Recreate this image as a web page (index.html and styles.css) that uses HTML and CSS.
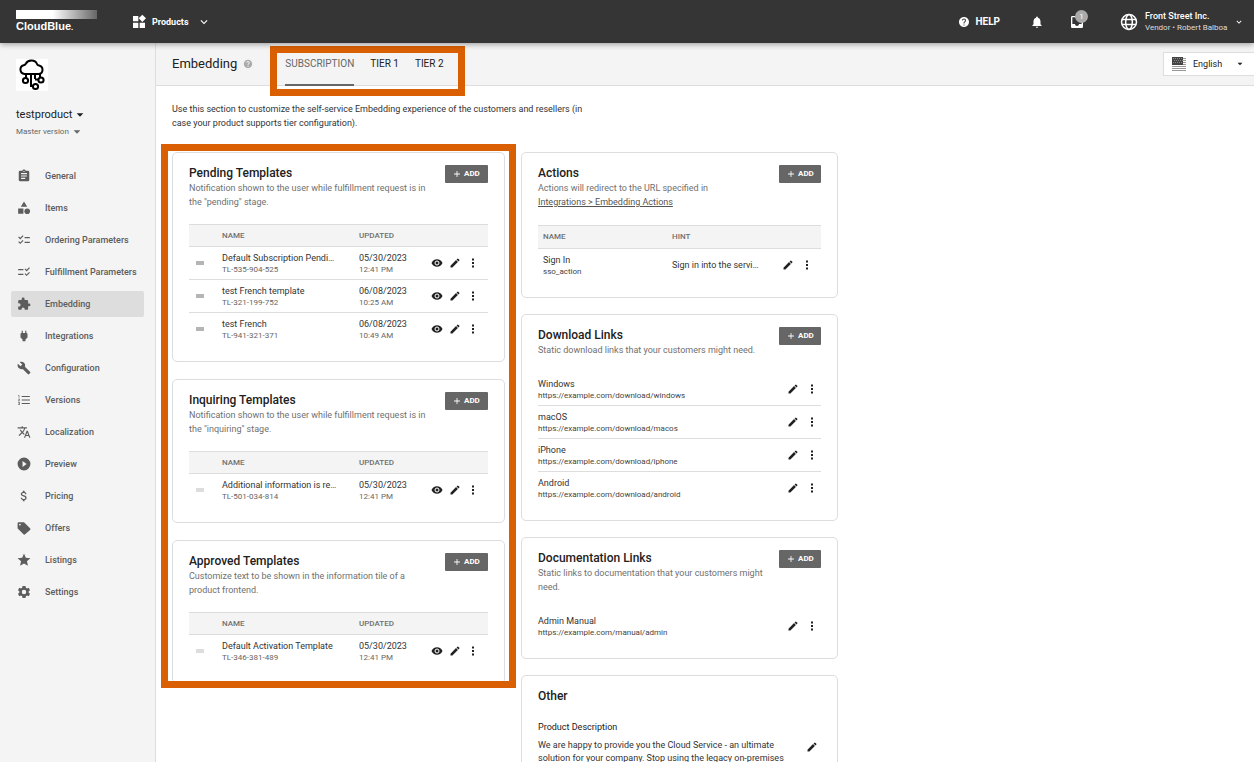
FILE: index.html
```html
<!DOCTYPE html>
<html lang="en">
<head>
<meta charset="utf-8">
<meta name="viewport" content="width=device-width, initial-scale=1">
<title>Embedding - CloudBlue</title>
<link rel="stylesheet" href="styles.css">
</head>
<body>
<svg class="sprite" aria-hidden="true">
  <symbol id="eye" viewBox="0 0 24 24"><path d="M12 4.5C7 4.500 2.730 7.610 1 12c1.730 4.390 6 7.500 11 7.500s9.270-3.110 11-7.500c-1.730-4.390-6-7.500-11-7.500z"/><circle cx="12" cy="12" r="4" fill="none" stroke="#fff" stroke-width="2"/></symbol>
  <symbol id="pencil" viewBox="0 0 24 24"><path d="M3 17.250V21h3.750L17.810 9.940l-3.750-3.750L3 17.250zM20.710 7.040a1 1 0 0 0 0-1.410l-2.340-2.340a1 1 0 0 0-1.410 0l-1.830 1.830 3.750 3.750 1.830-1.830z"/></symbol>
  <symbol id="dots" viewBox="0 0 24 24"><path d="M10 3h4v4h-4zM10 10h4v4h-4zM10 17h4v4h-4z"/></symbol>
  <symbol id="plus" viewBox="0 0 24 24"><path d="M19 13h-6v6h-2v-6H5v-2h6V5h2v6h6z"/></symbol>
  <symbol id="help" viewBox="0 0 24 24"><path d="M12 2C6.480 2 2 6.480 2 12s4.480 10 10 10 10-4.480 10-10S17.520 2 12 2zm1 17h-2v-2h2v2zm2.070-7.750l-.9.920C13.450 12.900 13 13.500 13 15h-2v-.5c0-1.100.45-2.100 1.170-2.830l1.240-1.260c.37-.36.59-.86.59-1.410 0-1.100-.9-2-2-2s-2 .9-2 2H8c0-2.210 1.790-4 4-4s4 1.790 4 4c0 .88-.36 1.680-.93 2.250z"/></symbol>
  <symbol id="chevron" viewBox="0 0 24 24"><path d="M7.410 8.590L12 13.170l4.590-4.580L18 10l-6 6-6-6z"/></symbol>
  <symbol id="caret" viewBox="0 0 24 24"><path d="M2 7h20L12 17z"/></symbol>
</svg>

<header class="topbar">
  <a class="logo" href="#"><span class="logo-bar"></span><span class="logo-name">CloudBlue<small>.</small></span></a>
  <button class="products" type="button">
    <svg class="icon-16" viewBox="0 0 24 24"><path d="M3 3h8v8H3zM3 13h8v8H3zM13 13h8v8h-8zM17 1l5.500 5.500L17 12l-5.500-5.500z"/></svg>
    <span>Products</span>
    <svg class="icon-14"><use href="#chevron"/></svg>
  </button>
  <div class="tools">
    <a class="help-link" href="#"><svg class="icon-12"><use href="#help"/></svg>HELP</a>
    <button class="tool" type="button" aria-label="Notifications"><svg class="icon-14" viewBox="0 0 24 24"><path d="M12 22c1.100 0 2-.9 2-2h-4c0 1.100.89 2 2 2zm6-6v-5c0-3.070-1.640-5.640-4.500-6.320V4c0-.83-.67-1.500-1.500-1.500s-1.500.67-1.500 1.500v.68C7.630 5.360 6 7.920 6 11v5l-2 2v1h16v-1l-2-2z"/></svg></button>
    <button class="tool inbox" type="button" aria-label="Inbox"><svg class="icon-16" viewBox="0 0 24 24"><path d="M19 3H5a2 2 0 0 0-2 2v14c0 1.100.9 2 2 2h14a2 2 0 0 0 2-2V5a2 2 0 0 0-2-2zm0 12h-4c0 1.660-1.350 3-3 3s-3-1.340-3-3H5V5h14v10z"/></svg><span class="badge">1</span></button>
    <button class="account" type="button">
      <svg class="icon-20 globe" viewBox="0 0 24 24" stroke="currentColor" stroke-width="1.800"><circle cx="12" cy="12" r="9"/><ellipse cx="12" cy="12" rx="4" ry="9"/><path d="M3.500 9h17M3.500 15h17"/></svg>
      <span class="account-text"><b>Front Street Inc.</b><small>Vendor • Robert Balboa</small></span>
      <svg class="icon-10"><use href="#chevron"/></svg>
    </button>
  </div>
</header>

<div class="shell">
  <aside class="sidebar">
    <svg class="product-logo" viewBox="0 0 32 32" stroke="#000" stroke-width="2"><path d="M9 15h-.5a4.500 4.500 0 0 1-.8-8.800C9 6 9.500 5.500 10 4.500 11.500 1 19 0 21 5c.3 1 1 1.300 2 1.500 5 1 4.500 8.500-.5 8.500zM10 15v4M15 15v12h2M19 15v5M24 15v4M19 20.500h4"/><circle cx="9.500" cy="21.500" r="2.600"/><circle cx="25" cy="21" r="2.600"/><circle cx="19.500" cy="27.500" r="2.600"/></svg>
    <button class="product-name" type="button">testproduct <svg class="icon-8"><use href="#caret"/></svg></button>
    <button class="product-version" type="button">Master version <svg class="icon-8"><use href="#caret"/></svg></button>
    <nav class="menu">
      <a href="#"><svg viewBox="0 0 24 24"><path d="M19 3h-4.200C14.400 1.800 13.300 1 12 1s-2.400.8-2.800 2H5a2 2 0 0 0-2 2v14c0 1.100.9 2 2 2h14a2 2 0 0 0 2-2V5a2 2 0 0 0-2-2zm-7 0a1 1 0 1 1 0 2 1 1 0 0 1 0-2zm2 14H7v-2h7v2zm3-4H7v-2h10v2zm0-4H7V7h10v2z"/></svg>General</a>
      <a href="#"><svg viewBox="0 0 24 24"><path d="M12 1l5.500 9h-11zM2 13h9v9H2z"/><circle cx="17.500" cy="17.500" r="4.800"/></svg>Items</a>
      <a href="#"><svg viewBox="0 0 24 24"><path d="M22 7h-9v2h9V7zm0 8h-9v2h9v-2zM5.540 11L2 7.460l1.410-1.410 2.120 2.120 4.240-4.240 1.410 1.410L5.540 11zm0 8L2 15.460l1.410-1.410 2.120 2.120 4.240-4.240 1.410 1.410L5.540 19z"/></svg>Ordering Parameters</a>
      <a href="#"><svg viewBox="0 0 24 24"><path d="M2 7h9v2H2zM2 15h9v2H2zM16.540 11L13 7.460l1.410-1.410 2.120 2.120 4.240-4.240 1.410 1.410L16.540 11zm0 8L13 15.460l1.410-1.410 2.120 2.120 4.240-4.240 1.410 1.410L16.540 19z"/></svg>Fulfillment Parameters</a>
      <a href="#" class="active" aria-current="page"><svg viewBox="0 0 24 24"><path d="M20.500 11H19V7a2 2 0 0 0-2-2h-4V3.500a2.500 2.500 0 0 0-5 0V5H4a2 2 0 0 0-2 2v3.800h1.500a2.700 2.700 0 0 1 0 5.400H2V20c0 1.100.9 2 2 2h3.800v-1.500a2.700 2.700 0 0 1 5.400 0V22H17a2 2 0 0 0 2-2v-4h1.500a2.500 2.500 0 0 0 0-5z"/></svg>Embedding</a>
      <a href="#"><svg viewBox="0 0 24 24"><path d="M16 7V3h-2v4h-4V3H8v4C6.900 7 6 7.900 6 9v5.500L9.500 18v3h5v-3l3.500-3.500V9c0-1.100-.9-2-2-2z"/></svg>Integrations</a>
      <a href="#"><svg viewBox="0 0 24 24"><path d="M22.700 19l-9.100-9.100c.9-2.300.4-5-1.500-6.900-2-2-5-2.400-7.400-1.300L9 6 6 9 1.600 4.700C.4 7.100.9 10.100 2.900 12.100c1.900 1.900 4.600 2.400 6.900 1.500l9.100 9.100c.4.4 1 .4 1.400 0l2.300-2.300c.5-.4.5-1.100.1-1.400z"/></svg>Configuration</a>
      <a href="#"><svg viewBox="0 0 24 24"><path d="M2 17h2v.5H3v1h1v.5H2v1h3v-4H2zM3 8h1V4H2v1h1zM2 11h1.800L2 13.100v.9h3v-1H3.200L5 10.900V10H2zM8 5v2h14V5zM8 19h14v-2H8zM8 13h14v-2H8z"/></svg>Versions</a>
      <a href="#"><svg viewBox="0 0 24 24"><path d="M12.870 15.070l-2.540-2.510.03-.03A17.520 17.520 0 0 0 14.070 6H17V4h-7V2H8v2H1v2h11.170C11.500 7.920 10.440 9.750 9 11.350 8.070 10.320 7.300 9.190 6.690 8h-2c.73 1.630 1.730 3.170 2.980 4.560l-5.090 5.020L4 19l5-5 3.110 3.110.76-2.040zM18.500 10h-2L12 22h2l1.120-3h4.750L21 22h2l-4.500-12zm-2.620 7l1.620-4.330L19.120 17h-3.240z"/></svg>Localization</a>
      <a href="#"><svg viewBox="0 0 24 24"><path d="M12 1a11 11 0 1 0 0 22 11 11 0 0 0 0-22zM9.500 17V7l7 5z"/></svg>Preview</a>
      <a href="#"><svg viewBox="0 0 24 24"><path d="M11.800 10.900c-2.270-.59-3-1.200-3-2.150 0-1.090 1.010-1.850 2.700-1.850 1.780 0 2.440.85 2.500 2.100h2.210c-.07-1.720-1.120-3.300-3.210-3.810V3h-3v2.160c-1.940.42-3.500 1.680-3.500 3.610 0 2.310 1.910 3.460 4.700 4.130 2.500.6 3 1.480 3 2.410 0 .69-.49 1.790-2.700 1.790-2.060 0-2.870-.92-2.980-2.100h-2.200c.12 2.190 1.760 3.420 3.680 3.830V21h3v-2.150c1.950-.37 3.500-1.500 3.500-3.550 0-2.840-2.430-3.810-4.700-4.400z"/></svg>Pricing</a>
      <a href="#"><svg viewBox="0 0 24 24"><path d="M22.400 12.600l-10-10C12 2.200 11.500 2 11 2H3a2 2 0 0 0-2 2v8c0 .6.200 1.100.6 1.400l9.500 9.500c.8.8 2 .8 2.800 0l8.500-7.500c.8-.8.800-2 0-2.800zM5 7.500A1.500 1.500 0 1 1 5 4.500a1.500 1.500 0 0 1 0 3z"/></svg>Offers</a>
      <a href="#"><svg viewBox="0 0 24 24"><path d="M12 17.800L18.800 22 17 14.200l6-5.200-8-.7L12 1 9 8.300 1 9l6 5.200L5.200 22z"/></svg>Listings</a>
      <a href="#"><svg viewBox="0 0 24 24"><path d="M20 13.200a8 8 0 0 0 0-2.400l2.400-1.900-2.400-4.200-2.900 1.100a8 8 0 0 0-2-1.200L14.600 1.600H9.400L9 4.600a8 8 0 0 0-2.100 1.200L4 4.700 1.600 8.900 4 10.800a8 8 0 0 0 0 2.400l-2.400 1.900L4 19.300l2.900-1.100a8 8 0 0 0 2.100 1.200l.4 3h5.200l.5-3a8 8 0 0 0 2-1.200l2.900 1.100 2.400-4.200zM12 15.800a3.800 3.800 0 1 1 0-7.600 3.800 3.800 0 0 1 0 7.600z"/></svg>Settings</a>
    </nav>
  </aside>

  <main class="main">
    <div class="subheader">
      <h1>Embedding</h1>
      <svg class="icon-10 hint"><use href="#help"/></svg>
      <nav class="tabs highlight">
        <a href="#" class="current">SUBSCRIPTION</a>
        <a href="#">TIER 1</a>
        <a href="#">TIER 2</a>
      </nav>
      <button class="language" type="button">
        <svg class="flag" viewBox="0 0 14 14"><path fill="#fff" d="M0 0h14v14H0z"/><path fill="#999" d="M0 1h14v1H0zM0 3h14v1H0zM0 5h14v1H0zM0 7h14v1H0zM0 9h14v1H0zM0 11h14v1H0zM0 13h14v1H0z"/><path fill="#444" d="M0 0h11v8H0z"/><path stroke="#888" stroke-dasharray="1 1" d="M1 1.500h9M2 3.500h9M1 5.500h9"/></svg>
        <span>English</span>
        <svg class="icon-6"><use href="#caret"/></svg>
      </button>
    </div>

    <div class="content">
      <p class="intro">Use this section to customize the self-service Embedding experience of the customers and resellers (in case your product supports tier configuration).</p>
      <div class="columns">
        <div class="column highlight">
          <section class="card">
            <div class="card-head">
              <div><h2>Pending Templates</h2><p>Notification shown to the user while fulfillment request is in the "pending" stage.</p></div>
              <button class="add" type="button"><svg class="icon-10"><use href="#plus"/></svg>ADD</button>
            </div>
            <table class="templates">
              <thead><tr><th class="grip-col"></th><th class="name-col">NAME</th><th>UPDATED</th><th class="act-col"></th></tr></thead>
              <tbody>
                <tr><td><span class="grip"></span></td><td><span class="line">Default Subscription Pendi…</span><small>TL-535-904-525</small></td><td><span class="line">05/30/2023</span><small>12:41 PM</small></td><td><div class="acts"><button type="button" aria-label="View"><svg><use href="#eye"/></svg></button><button type="button" aria-label="Edit"><svg><use href="#pencil"/></svg></button><button type="button" aria-label="More"><svg><use href="#dots"/></svg></button></div></td></tr>
                <tr><td><span class="grip"></span></td><td><span class="line">test French template</span><small>TL-321-199-752</small></td><td><span class="line">06/08/2023</span><small>10:25 AM</small></td><td><div class="acts"><button type="button" aria-label="View"><svg><use href="#eye"/></svg></button><button type="button" aria-label="Edit"><svg><use href="#pencil"/></svg></button><button type="button" aria-label="More"><svg><use href="#dots"/></svg></button></div></td></tr>
                <tr><td><span class="grip"></span></td><td><span class="line">test French</span><small>TL-941-321-371</small></td><td><span class="line">06/08/2023</span><small>10:49 AM</small></td><td><div class="acts"><button type="button" aria-label="View"><svg><use href="#eye"/></svg></button><button type="button" aria-label="Edit"><svg><use href="#pencil"/></svg></button><button type="button" aria-label="More"><svg><use href="#dots"/></svg></button></div></td></tr>
              </tbody>
            </table>
          </section>
          <section class="card">
            <div class="card-head">
              <div><h2>Inquiring Templates</h2><p>Notification shown to the user while fulfillment request is in the "inquiring" stage.</p></div>
              <button class="add" type="button"><svg class="icon-10"><use href="#plus"/></svg>ADD</button>
            </div>
            <table class="templates">
              <thead><tr><th class="grip-col"></th><th class="name-col">NAME</th><th>UPDATED</th><th class="act-col"></th></tr></thead>
              <tbody>
                <tr><td><span class="grip off"></span></td><td><span class="line">Additional information is re…</span><small>TL-501-034-814</small></td><td><span class="line">05/30/2023</span><small>12:41 PM</small></td><td><div class="acts"><button type="button" aria-label="View"><svg><use href="#eye"/></svg></button><button type="button" aria-label="Edit"><svg><use href="#pencil"/></svg></button><button type="button" aria-label="More"><svg><use href="#dots"/></svg></button></div></td></tr>
              </tbody>
            </table>
          </section>
          <section class="card">
            <div class="card-head">
              <div><h2>Approved Templates</h2><p>Customize text to be shown in the information tile of a product frontend.</p></div>
              <button class="add" type="button"><svg class="icon-10"><use href="#plus"/></svg>ADD</button>
            </div>
            <table class="templates">
              <thead><tr><th class="grip-col"></th><th class="name-col">NAME</th><th>UPDATED</th><th class="act-col"></th></tr></thead>
              <tbody>
                <tr><td><span class="grip off"></span></td><td><span class="line">Default Activation Template</span><small>TL-346-381-489</small></td><td><span class="line">05/30/2023</span><small>12:41 PM</small></td><td><div class="acts"><button type="button" aria-label="View"><svg><use href="#eye"/></svg></button><button type="button" aria-label="Edit"><svg><use href="#pencil"/></svg></button><button type="button" aria-label="More"><svg><use href="#dots"/></svg></button></div></td></tr>
              </tbody>
            </table>
          </section>
        </div>

        <div class="column side">
          <section class="card">
            <div class="card-head">
              <div><h2>Actions</h2><p>Actions will redirect to the URL specified in<br><a href="#">Integrations &gt; Embedding Actions</a></p></div>
              <button class="add" type="button"><svg class="icon-10"><use href="#plus"/></svg>ADD</button>
            </div>
            <table class="actions">
              <thead><tr><th class="name-col">NAME</th><th>HINT</th><th class="act-col"></th></tr></thead>
              <tbody>
                <tr><td><span class="line">Sign In</span><small class="dark">sso_action</small></td><td><span class="line">Sign in into the servi…</span></td><td><div class="acts"><button type="button" aria-label="Edit"><svg><use href="#pencil"/></svg></button><button type="button" aria-label="More"><svg><use href="#dots"/></svg></button></div></td></tr>
              </tbody>
            </table>
          </section>
          <section class="card">
            <div class="card-head">
              <div><h2>Download Links</h2><p>Static download links that your customers might need.</p></div>
              <button class="add" type="button"><svg class="icon-10"><use href="#plus"/></svg>ADD</button>
            </div>
            <ul class="links">
              <li><div><span class="line">Windows</span><small class="dark">https://example.com/download/windows</small></div><div class="acts"><button type="button" aria-label="Edit"><svg><use href="#pencil"/></svg></button><button type="button" aria-label="More"><svg><use href="#dots"/></svg></button></div></li>
              <li><div><span class="line">macOS</span><small class="dark">https://example.com/download/macos</small></div><div class="acts"><button type="button" aria-label="Edit"><svg><use href="#pencil"/></svg></button><button type="button" aria-label="More"><svg><use href="#dots"/></svg></button></div></li>
              <li><div><span class="line">iPhone</span><small class="dark">https://example.com/download/iphone</small></div><div class="acts"><button type="button" aria-label="Edit"><svg><use href="#pencil"/></svg></button><button type="button" aria-label="More"><svg><use href="#dots"/></svg></button></div></li>
              <li><div><span class="line">Android</span><small class="dark">https://example.com/download/android</small></div><div class="acts"><button type="button" aria-label="Edit"><svg><use href="#pencil"/></svg></button><button type="button" aria-label="More"><svg><use href="#dots"/></svg></button></div></li>
            </ul>
          </section>
          <section class="card">
            <div class="card-head">
              <div><h2>Documentation Links</h2><p>Static links to documentation that your customers might need.</p></div>
              <button class="add" type="button"><svg class="icon-10"><use href="#plus"/></svg>ADD</button>
            </div>
            <ul class="links">
              <li><div><span class="line">Admin Manual</span><small class="dark">https://example.com/manual/admin</small></div><div class="acts"><button type="button" aria-label="Edit"><svg><use href="#pencil"/></svg></button><button type="button" aria-label="More"><svg><use href="#dots"/></svg></button></div></li>
            </ul>
          </section>
          <section class="card">
            <h2>Other</h2>
            <h3>Product Description</h3>
            <div class="description">
              <p>We are happy to provide you the Cloud Service - an ultimate solution for your company. Stop using the legacy on-premises</p>
              <div class="acts"><button type="button" aria-label="Edit"><svg><use href="#pencil"/></svg></button></div>
            </div>
          </section>
        </div>
      </div>
    </div>
  </main>
</div>
</body>
</html>
```
FILE: styles.css
```css
* { box-sizing: border-box; }

body {
  margin: 0;
  height: 100vh;
  display: flex;
  flex-direction: column;
  overflow: hidden;
  background: #fff;
  color: #212121;
  font: 9px/14px Roboto, "Liberation Sans", sans-serif;
}

h1, h2, h3, p, ul { margin: 0; padding: 0; font-weight: 400; }
a { color: inherit; text-decoration: none; }
button { margin: 0; padding: 0; border: 0; background: none; color: inherit; font: inherit; text-align: left; cursor: pointer; }
svg { display: block; flex: none; fill: currentColor; }
small { font-size: 8px; }

.sprite { position: absolute; width: 0; height: 0; }
.icon-6 { width: 6px; height: 6px; }
.icon-8 { width: 8px; height: 8px; }
.icon-10 { width: 10px; height: 10px; }
.icon-12 { width: 12px; height: 12px; }
.icon-14 { width: 14px; height: 14px; }
.icon-16 { width: 16px; height: 16px; }
.icon-20 { width: 20px; height: 20px; }

/* Top bar */
.topbar {
  flex: none;
  z-index: 1;
  display: flex;
  align-items: center;
  height: 43px;
  padding: 0 10px 0 16px;
  background: #353535;
  color: #fff;
  box-shadow: 0 1px 6px rgba(0, 0, 0, 0.4);
}
.logo { display: flex; flex-direction: column; width: 81px; gap: 2px; }
.logo-bar { height: 9px; background: linear-gradient(90deg, #fff 45%, #666); }
.logo-name { font: bold 11px/11px "Liberation Sans", Arial, sans-serif; }
.products { display: flex; align-items: center; gap: 5px; margin-left: 34px; font-weight: 700; }
.products svg:last-child { margin-left: 3px; }
.tools { display: flex; align-items: center; margin-left: auto; }
.help-link { display: flex; align-items: center; gap: 5px; font-size: 10px; font-weight: 700; }
.tool { margin-left: 30px; }
.inbox { position: relative; margin-left: 25px; }
.badge {
  position: absolute;
  top: -4px;
  right: -3px;
  width: 13px;
  height: 13px;
  border-radius: 50%;
  background: #aaa;
  font-size: 8px;
  line-height: 13px;
  text-align: center;
}
.account { display: flex; align-items: center; margin-left: 34px; }
.globe { fill: none; }
.account-text { display: flex; flex-direction: column; width: 84px; margin: 0 5px 0 6px; line-height: 11px; white-space: nowrap; }
.account-text b { font-weight: 500; }
.account-text small { color: #ddd; }

.shell { flex: 1; display: flex; min-height: 0; }

/* Sidebar */
.sidebar { flex: none; width: 156px; padding: 16px 11px 0; border-right: 1px solid #ddd; background: #f4f4f4; }
.product-logo { width: 32px; height: 32px; margin-left: 5px; background: #fff; fill: none; }
.product-name, .product-version { display: flex; align-items: center; gap: 4px; margin-left: 5px; }
.product-name { margin-top: 16px; font-size: 11px; line-height: 16px; }
.product-version { margin-top: 1px; color: #666; font-size: 8px; line-height: 16px; }
.menu { display: flex; flex-direction: column; gap: 6px; margin-top: 23px; }
.menu a { display: flex; align-items: center; gap: 14px; height: 26px; padding-left: 6px; border-radius: 2px; color: #5c5c5c; font-weight: 500; white-space: nowrap; }
.menu svg { width: 14px; height: 14px; }
.menu .active { background: #ddd; }

/* Page header */
.main { flex: 1; min-width: 0; display: flex; flex-direction: column; }
.subheader { flex: none; display: flex; align-items: center; height: 43px; padding-left: 16px; border-bottom: 1px solid #ddd; background: #f4f4f4; }
h1 { font-size: 13px; }
.hint { margin-left: 6px; color: #aaa; }
.tabs { display: flex; gap: 16px; align-self: stretch; margin-left: 32px; font-size: 10px; }
.tabs a { display: flex; align-items: center; height: 43px; border-bottom: 2px solid transparent; }
.tabs .current { border-color: #666; color: #666; }
.language { display: flex; align-items: center; width: 91px; height: 24px; margin-left: auto; padding-left: 8px; border: 1px solid #ddd; border-right: 0; background: #fff; }
.language span { flex: 1; margin-left: 7px; }
.language .icon-6 { margin-right: 11px; }
.flag { width: 14px; height: 14px; }

/* Orange callout frames */
.highlight { position: relative; }
.highlight::after { content: ""; position: absolute; border: 7px solid #d95f02; pointer-events: none; }
.tabs.highlight::after { inset: 3px -21px -11px -15px; }
.column.highlight::after { inset: -8px -11px -4px -11px; }

/* Content */
.content { flex: 1; min-height: 0; overflow: hidden; padding: 16px; }
.intro { max-width: 426px; color: #333; }
.columns { display: grid; grid-template-columns: minmax(0, 333px) minmax(0, 317px); gap: 16px; align-items: start; margin-top: 22px; }
.column { display: grid; gap: 17px; }

.card { padding: 12px 16px 15px; border: 1px solid #ddd; border-radius: 5px; }
.card-head { display: flex; justify-content: space-between; gap: 8px; margin-bottom: 15px; }
.card-head p { color: #707070; }
.card-head p a { color: #555; text-decoration: underline; }
h2 { font-size: 12px; line-height: 16px; font-weight: 500; }
.add { flex: none; display: flex; align-items: center; gap: 2px; width: 43px; height: 18px; padding-left: 7px; border-radius: 1px; background: #666; color: #fff; font-weight: 700; font-size: 8px; }
.side { gap: 16px; }
.side .card-head { margin-bottom: 16px; }
.side .add { width: 42px; }
.side th { height: 24px; }

table { width: 100%; table-layout: fixed; border-collapse: separate; border-spacing: 0; }
th { height: 23px; padding: 0; border: solid #ddd; border-width: 1px 0; background: #f4f4f4; color: #707070; font-size: 8px; line-height: 12px; font-weight: 500; text-align: left; }
td { height: 33px; padding: 0; border-bottom: 1px solid #ddd; }
tr:last-child td { border-color: transparent; }
.line { display: block; line-height: 12px; color: #333; white-space: nowrap; }
td small, li small { display: block; line-height: 11px; color: #666; }
small.dark { color: #444; }
.grip-col { width: 33px; }
.templates .name-col { width: 137px; }
.templates .act-col { width: 60px; }
.actions .name-col { width: 134px; }
.actions .act-col { width: 54px; }
.actions th:first-child, .actions td:first-child { padding-left: 5px; }
.grip { display: block; width: 8px; height: 4px; margin-left: 7px; background: #b5b5b5; }
.grip.off { background: #ddd; }

.acts { display: flex; justify-content: flex-end; gap: 7px; padding-right: 9px; }
.acts svg { width: 12px; height: 12px; }
.templates .acts { gap: 6px; }
.actions .acts { padding-right: 8px; }

.links { list-style: none; }
.links li { display: flex; align-items: center; justify-content: space-between; height: 33px; border-bottom: 1px solid #ddd; }
.links li:last-child { border-color: transparent; }
.links .acts { padding-right: 3px; }

h3 { margin-top: 16px; font-size: 9px; }
.description { display: flex; align-items: flex-start; justify-content: space-between; gap: 8px; margin-top: 5px; color: #333; line-height: 13px; }
.description .acts { padding: 2px 3px 0 0; color: #212121; }
```
